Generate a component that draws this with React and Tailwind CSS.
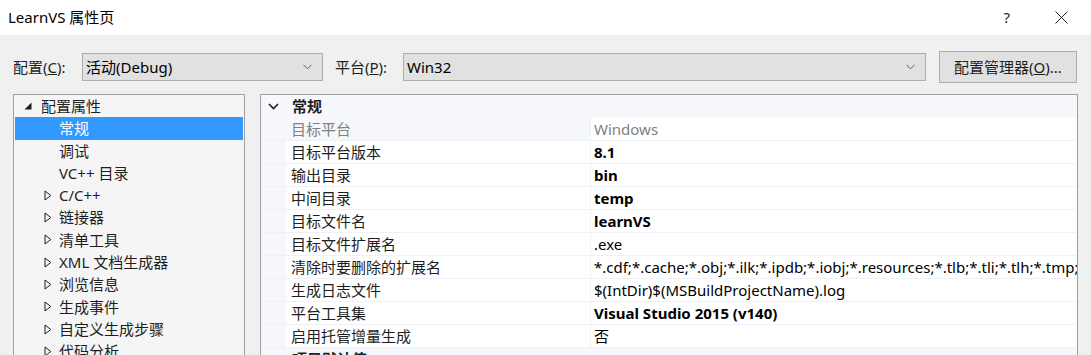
import React from 'react'

const font = { fontFamily: '"Noto Sans", "Noto Sans CJK SC", sans-serif' }

function Chevron({ className }) {
  return (
    <svg className={className} width="9" height="6" viewBox="0 0 9 6">
      <path d="M0.5 0.8 L4.5 4.8 L8.5 0.8" fill="none" stroke="#5a5a5a" strokeWidth="1" />
    </svg>
  )
}

function Select({ value, className }) {
  return (
    <div className={`h-[28px] bg-[#e1e1e1] border border-[#adadad] flex items-center pl-[3px] pr-[10px] ${className}`}>
      <span className="flex-1 text-[15px] text-black">{value}</span>
      <Chevron />
    </div>
  )
}

function Collapsed() {
  return (
    <svg width="8" height="11" viewBox="0 0 8 11" className="shrink-0">
      <path d="M1 1 L6.8 5.5 L1 10 Z" fill="none" stroke="#1e1e1e" strokeWidth="1" />
    </svg>
  )
}

const tree = [
  { label: '配置属性', level: 0, root: true },
  { label: '常规', level: 1, selected: true },
  { label: '调试', level: 1 },
  { label: 'VC++ 目录', level: 1 },
  { label: 'C/C++', level: 1, arrow: true },
  { label: '链接器', level: 1, arrow: true },
  { label: '清单工具', level: 1, arrow: true },
  { label: 'XML 文档生成器', level: 1, arrow: true },
  { label: '浏览信息', level: 1, arrow: true },
  { label: '生成事件', level: 1, arrow: true },
  { label: '自定义生成步骤', level: 1, arrow: true },
  { label: '代码分析', level: 1, arrow: true },
]

const rows = [
  { name: '目标平台', value: 'Windows', disabled: true },
  { name: '目标平台版本', value: '8.1', bold: true },
  { name: '输出目录', value: 'bin', bold: true },
  { name: '中间目录', value: 'temp', bold: true },
  { name: '目标文件名', value: 'learnVS', bold: true },
  { name: '目标文件扩展名', value: '.exe' },
  { name: '清除时要删除的扩展名', value: '*.cdf;*.cache;*.obj;*.ilk;*.ipdb;*.iobj;*.resources;*.tlb;*.tli;*.tlh;*.tmp;*.rsp;*.pgc;*.pgd;*.meta;*.tlog' },
  { name: '生成日志文件', value: '$(IntDir)$(MSBuildProjectName).log' },
  { name: '平台工具集', value: 'Visual Studio 2015 (v140)', bold: true },
  { name: '启用托管增量生成', value: '否' },
]

function TreeRow({ item }) {
  return (
    <div className={`h-[22.3px] flex items-center ${item.selected ? 'bg-[#3399ff] text-white' : 'text-[#1e1e1e]'}`}>
      {item.root ? (
        <div className="flex items-center pl-[9px]">
          <svg width="8" height="8" viewBox="0 0 8 8" className="mr-[9px]">
            <path d="M7.5 0.5 L7.5 7.5 L0.5 7.5 Z" fill="#1e1e1e" />
          </svg>
          <span>{item.label}</span>
        </div>
      ) : (
        <div className="flex items-center pl-[29px]">
          <div className="w-[15px]">{item.arrow && <Collapsed />}</div>
          <span>{item.label}</span>
        </div>
      )}
    </div>
  )
}

function SectionHeader({ title }) {
  return (
    <div className="h-[23px] flex items-center shrink-0">
      <svg width="11" height="7" viewBox="0 0 11 7" className="ml-[7px] mr-[13px]">
        <path d="M1 1 L5.5 5.5 L10 1" fill="none" stroke="#1e1e1e" strokeWidth="1.6" />
      </svg>
      <span className="font-bold text-[#1e1e1e]">{title}</span>
    </div>
  )
}

export default function App() {
  return (
    <div className="w-[1091px] h-[355px] overflow-hidden bg-[#f0f0f0] text-[15px] flex flex-col" style={font}>
      <div className="h-[35px] bg-white flex items-center pl-[8px] shrink-0">
        <span className="flex-1 text-black">LearnVS 属性页</span>
        <span className="text-[#1e1e1e] mr-[45px]">?</span>
        <svg width="13" height="13" viewBox="0 0 13 13" className="mr-[23px]">
          <path d="M0.5 0.5 L12.5 12.5 M12.5 0.5 L0.5 12.5" stroke="#1e1e1e" strokeWidth="1" />
        </svg>
      </div>

      <div className="flex items-center pl-[13px] mt-[16px] h-[32px] shrink-0">
        <span className="w-[69px] text-[#1e1e1e]">配置(<u>C</u>):</span>
        <Select value="活动(Debug)" className="w-[241px]" />
        <span className="w-[68px] ml-[12px] text-[#1e1e1e]">平台(<u>P</u>):</span>
        <Select value="Win32" className="w-[523px]" />
        <button className="ml-[13px] w-[138px] h-[32px] bg-[#e1e1e1] border border-[#adadad] text-[#1e1e1e] text-[15px]">
          配置管理器(<u>O</u>)...
        </button>
      </div>

      <div className="flex mt-[11px] pl-[13px] gap-[15px] flex-1 min-h-0">
        <div className="w-[232px] h-[300px] shrink-0 border border-[#a0a0a0] bg-[#f5f5f5] px-px pb-px">
          {tree.map((item) => (
            <TreeRow key={item.label} item={item} />
          ))}
        </div>

        <div className="w-[818px] h-[300px] shrink-0 border border-[#a0a0a0] bg-[#f5f7fa] flex flex-col">
          <SectionHeader title="常规" />
          {rows.map((r) => (
            <div key={r.name} className="h-[23px] flex shrink-0 border-b border-[#eef1f5]">
              <div className="w-[25px] shrink-0" />
              <div className={`w-[305px] shrink-0 pl-[5px] flex items-center border-r border-[#eef1f5] ${r.disabled ? 'text-[#808080]' : 'bg-white text-[#1e1e1e]'}`}>
                {r.name}
              </div>
              <div className={`flex-1 min-w-0 pl-[3px] flex items-center bg-white whitespace-nowrap overflow-hidden ${r.disabled ? 'text-[#808080]' : 'text-black'} ${r.bold ? 'font-bold' : ''}`}>
                {r.value}
              </div>
            </div>
          ))}
          <SectionHeader title="项目默认值" />
        </div>
      </div>
    </div>
  )
}
